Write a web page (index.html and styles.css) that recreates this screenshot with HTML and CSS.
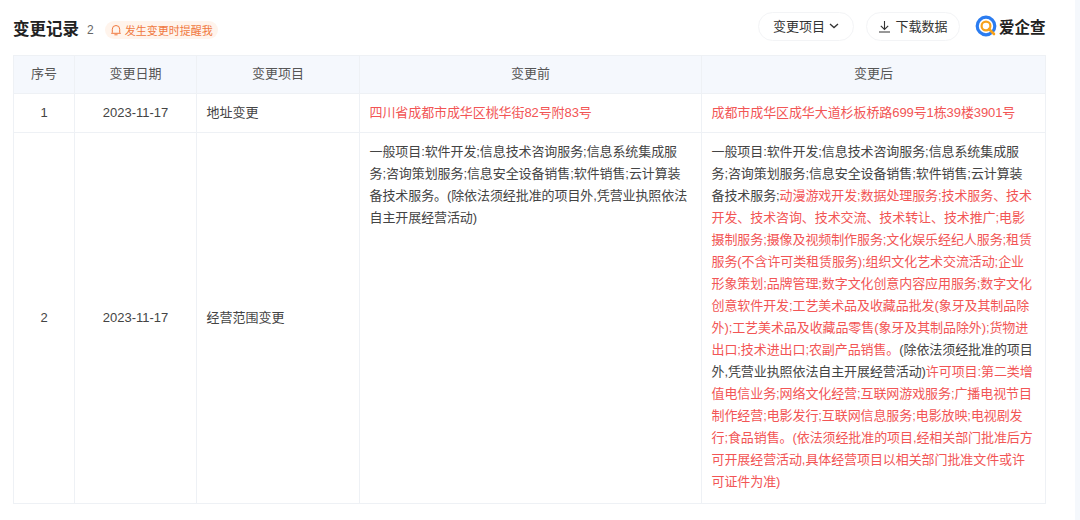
FILE: index.html
```html
<!DOCTYPE html>
<html lang="zh-CN">
<head>
<meta charset="utf-8">
<title>变更记录</title>
<link rel="stylesheet" href="styles.css">
</head>
<body>
<div class="page">
  <header class="bar">
    <div class="bar-left">
      <h2 class="title">变更记录</h2>
      <span class="count">2</span>
      <span class="remind">
        <svg class="bell" width="12" height="12" viewBox="0 0 12 12" fill="none" stroke="#f0793f" stroke-width="1"><path d="M2.3 8.6V5.2a3.7 3.7 0 0 1 7.4 0v3.4l.8.7H1.5z" stroke-linejoin="round"/><path d="M4.8 10.8h2.4" stroke-linecap="round"/></svg>
        发生变更时提醒我
      </span>
    </div>
    <div class="bar-right">
      <button class="pill pill-filter"><span class="pill-text">变更项目</span>
        <svg width="10" height="6" viewBox="0 0 10 6" fill="none" stroke="#333" stroke-width="1.3"><path d="M1 1l4 3.6L9 1"/></svg>
      </button>
      <button class="pill pill-download">
        <svg width="13" height="13" viewBox="0 0 13 13" fill="none" stroke="#333" stroke-width="1.1"><path d="M6.5 1v8.2M2.8 5.8l3.7 3.6 3.7-3.6M1 12h11"/></svg>
        <span class="pill-text">下载数据</span>
      </button>
      <div class="logo">
        <svg width="22" height="22" viewBox="0 0 22 22" fill="none"><circle cx="11" cy="11" r="8.8" stroke="#2b7cf0" stroke-width="3.2"/><circle cx="11" cy="11" r="4.4" stroke="#f7a21b" stroke-width="2.2"/><path d="M14 14l5 5" stroke="#f7a21b" stroke-width="2.6" stroke-linecap="round"/></svg>
        <span class="logo-text">爱企查</span>
      </div>
    </div>
  </header>
  <table class="records">
    <colgroup>
      <col class="c-no"><col class="c-date"><col class="c-item"><col class="c-before"><col class="c-after">
    </colgroup>
    <thead>
      <tr><th>序号</th><th>变更日期</th><th>变更项目</th><th>变更前</th><th>变更后</th></tr>
    </thead>
    <tbody>
      <tr class="row-short">
        <td class="center">1</td>
        <td class="center">2023-11-17</td>
        <td>地址变更</td>
        <td class="red tight">四川省成都市成华区桃华街82号附83号</td>
        <td class="red tight">成都市成华区成华大道杉板桥路699号1栋39楼3901号</td>
      </tr>
      <tr>
        <td class="center">2</td>
        <td class="center">2023-11-17</td>
        <td>经营范围变更</td>
        <td class="top tight">一般项目:软件开发;信息技术咨询服务;信息系统集成服务;咨询策划服务;信息安全设备销售;软件销售;云计算装备技术服务。(除依法须经批准的项目外,凭营业执照依法自主开展经营活动)</td>
        <td class="top tight">一般项目:软件开发;信息技术咨询服务;信息系统集成服务;咨询策划服务;信息安全设备销售;软件销售;云计算装备技术服务;<span class="red">动漫游戏开发;数据处理服务;技术服务、技术开发、技术咨询、技术交流、技术转让、技术推广;电影摄制服务;摄像及视频制作服务;文化娱乐经纪人服务;租赁服务(不含许可类租赁服务);组织文化艺术交流活动;企业形象策划;品牌管理;数字文化创意内容应用服务;数字文化创意软件开发;工艺美术品及收藏品批发(象牙及其制品除外);工艺美术品及收藏品零售(象牙及其制品除外);货物进出口;技术进出口;农副产品销售。</span>(除依法须经批准的项目外,凭营业执照依法自主开展经营活动)<span class="red">许可项目:第二类增值电信业务;网络文化经营;互联网游戏服务;广播电视节目制作经营;电影发行;互联网信息服务;电影放映;电视剧发行;食品销售。(依法须经批准的项目,经相关部门批准后方可开展经营活动,具体经营项目以相关部门批准文件或许可证件为准)</span></td>
      </tr>
    </tbody>
  </table>
</div>
<div class="edge"></div>
</body>
</html>
```
FILE: styles.css
```css
html, body { margin: 0; height: 100%; }
body {
  display: flex;
  background: #fff;
  color: #444;
  font-family: "Liberation Sans", "Noto Sans CJK SC", sans-serif;
  font-size: 13px;
  overflow: hidden;
}
.page { width: 1075px; flex: none; padding: 11px 0 0 13px; box-sizing: border-box; }
.edge { flex: 1; background: #f5f8fc; }
.bar {
  width: 1033px;
  height: 44px;
  display: flex;
  justify-content: space-between;
  align-items: flex-start;
}
.bar-left { display: flex; align-items: center; height: 38px; }
.title { margin: 0 0 4px; font-size: 16.5px; font-weight: 700; color: #222; }
.count { margin-left: 8px; font-size: 12px; color: #666; }
.remind {
  margin-left: 11px;
  height: 18px;
  padding: 0 5px;
  display: flex;
  align-items: center;
  gap: 3px;
  font-size: 11px;
  color: #f0793f;
  background: #fff4ec;
  border-radius: 9px;
}
.bar-right { display: flex; align-items: center; height: 30px; }
.pill {
  height: 29px;
  padding: 0;
  display: flex;
  align-items: center;
  justify-content: center;
  gap: 4px;
  font: inherit;
  color: #333;
  background: #fff;
  border: 1px solid #f3f4f6;
  border-radius: 15px;
  box-sizing: border-box;
}
.pill-text { margin-bottom: 2px; }
.pill-filter { width: 96px; }
.pill-download { width: 94px; margin-left: 12px; }
.logo { display: flex; align-items: center; margin-left: 15px; width: 71px; }
.logo-text { font-size: 15.5px; font-weight: 700; color: #222; margin-left: 2px; }
.records {
  width: 1032px;
  table-layout: fixed;
  border-collapse: collapse;
  line-height: 22px;
}
.c-no { width: 61px; }
.c-date { width: 122px; }
.c-item { width: 163px; }
.c-before { width: 342px; }
.c-after { width: 344px; }
.records th, .records td { border: 1px solid #eef1f5; padding: 8px 9.5px; }
.records th {
  height: 38px;
  box-sizing: border-box;
  padding: 0 0 2px;
  font-weight: 400;
  color: #555;
  background: #f5f8fd;
}
.row-short td { height: 39px; box-sizing: border-box; padding-top: 0; padding-bottom: 0; }
.center { text-align: center; }
.records .top { vertical-align: top; padding: 8px 12px 10px 9.5px; }
.tight { letter-spacing: -0.09px; }
.red { color: #f25555; }
```
